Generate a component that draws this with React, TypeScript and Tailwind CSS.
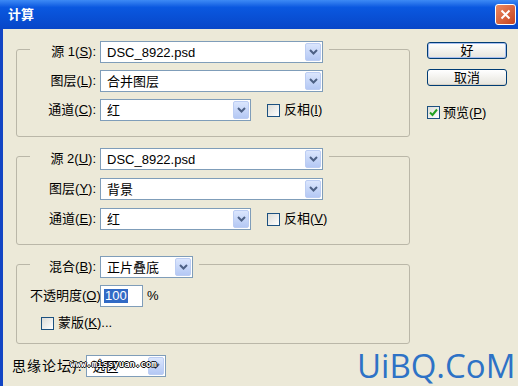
import React from "react";

const Chevron = () => (
    <svg width="9" height="6" viewBox="0 0 9 6">
        <path d="M1 1l3.5 3.5L8 1" fill="none" stroke="#4d6185" strokeWidth="2" />
    </svg>
);

const Select = ({ value, width }: { value: string; width: string }) => (
    <div className={`${width} h-[22px] flex items-center justify-between border border-[#7f9db9] bg-white`}>
        <span className="pl-[6px] text-[13px] text-black leading-none">{value}</span>
        <div className="w-[16px] h-[18px] mr-[1px] flex items-center justify-center rounded-[2px] border border-[#bccdf3] bg-linear-to-b from-[#dbe6fd] to-[#b4c8f4]">
            <Chevron />
        </div>
    </div>
);

const Check = ({ checked = false }: { checked?: boolean }) => (
    <div className="w-[13px] h-[13px] flex items-center justify-center border border-[#1c5180] bg-linear-to-br from-[#dcdcd7] to-white">
        {checked && (
            <svg width="9" height="9" viewBox="0 0 9 9">
                <path d="M1 4.5l2.5 2.5L8 1.5" fill="none" stroke="#21a121" strokeWidth="2" />
            </svg>
        )}
    </div>
);

const Row = ({ label, children }: { label: React.ReactNode; children: React.ReactNode }) => (
    <div className="flex items-center h-[22px]">
        <div className="w-[70px] pr-[4px] text-right text-[13px] whitespace-nowrap">{label}</div>
        {children}
    </div>
);

const Group = ({ legend, children, className = "" }: { legend: React.ReactNode; children: React.ReactNode; className?: string }) => (
    <div className={`border border-[#bab7a8] rounded-[3px] ${className}`}>
        <div className="-mt-[9px] ml-[13px] w-fit pr-[6px] bg-[#ece9d8]">{legend}</div>
        {children}
    </div>
);

const Button = ({ children, primary = false }: { children: React.ReactNode; primary?: boolean }) => (
    <div
        className={`w-[80px] h-[17px] flex items-center justify-center rounded-[3px] border border-[#003c74] bg-linear-to-b from-white to-[#e6e4dc] text-[13px] leading-none ${
            primary ? "shadow-[inset_0_0_0_1px_#a8bff0]" : "shadow-[inset_0_-1px_0_#d8d2c6]"
        }`}
    >
        {children}
    </div>
);

const App = () => {
    return (
        <div className="relative w-[518px] h-[386px] overflow-hidden bg-[#ece9d8] text-black font-['Liberation_Sans','Noto_Sans_CJK_SC',sans-serif]">
            {/* title bar */}
            <div className="h-[29px] flex items-center justify-between pl-[8px] pr-[2px] bg-linear-to-b from-[#3d8af5] via-[#0a58e0] via-25% to-[#0846c8]">
                <span className="text-white font-bold text-[13px]">计算</span>
                <div className="w-[21px] h-[21px] flex items-center justify-center rounded-[3px] border border-white bg-linear-to-br from-[#ec8a62] to-[#c4401c]">
                    <svg width="11" height="11" viewBox="0 0 11 11">
                        <path d="M1.5 1.5l8 8M9.5 1.5l-8 8" stroke="white" strokeWidth="2" />
                    </svg>
                </div>
            </div>

            <div className="flex h-[357px] border-l-[3px] border-[#1245c4]">
                {/* left column */}
                <div className="w-[394px] ml-[13px] pt-[20px] flex flex-col">
                    <Group
                        legend={
                            <Row label={<>源 1(<u>S</u>):</>}>
                                <Select value="DSC_8922.psd" width="w-[223px]" />
                            </Row>
                        }
                    >
                        <div className="flex flex-col gap-[7px] pt-[7px] pb-[15px] pl-[13px]">
                            <Row label={<>图层(<u>L</u>):</>}>
                                <Select value="合并图层" width="w-[223px]" />
                            </Row>
                            <Row label={<>通道(<u>C</u>):</>}>
                                <Select value="红" width="w-[151px]" />
                                <div className="ml-[16px] flex items-center gap-[4px] text-[13px]">
                                    <Check />
                                    <span>反相(<u>I</u>)</span>
                                </div>
                            </Row>
                        </div>
                    </Group>

                    <Group
                        className="mt-[19px]"
                        legend={
                            <Row label={<>源 2(<u>U</u>):</>}>
                                <Select value="DSC_8922.psd" width="w-[223px]" />
                            </Row>
                        }
                    >
                        <div className="flex flex-col gap-[8px] pt-[8px] pb-[14px] pl-[13px]">
                            <Row label={<>图层(<u>Y</u>):</>}>
                                <Select value="背景" width="w-[223px]" />
                            </Row>
                            <Row label={<>通道(<u>E</u>):</>}>
                                <Select value="红" width="w-[151px]" />
                                <div className="ml-[16px] flex items-center gap-[4px] text-[13px]">
                                    <Check />
                                    <span>反相(<u>V</u>)</span>
                                </div>
                            </Row>
                        </div>
                    </Group>

                    <Group
                        className="mt-[19px]"
                        legend={
                            <Row label={<>混合(<u>B</u>):</>}>
                                <Select value="正片叠底" width="w-[93px]" />
                            </Row>
                        }
                    >
                        <div className="flex flex-col pt-[7px] pb-[13px] pl-[13px]">
                            <Row label={<>不透明度(<u>O</u>):</>}>
                                <div className="w-[43px] h-[22px] flex items-center pl-[3px] border border-[#7f9db9] bg-white">
                                    <span className="bg-[#316ac5] text-white text-[13px] leading-[14px] px-[1px]">100</span>
                                </div>
                                <span className="ml-[4px] text-[13px]">%</span>
                            </Row>
                            <div className="mt-[9px] ml-[11px] h-[14px] flex items-center gap-[4px] text-[13px]">
                                <Check />
                                <span>蒙版(<u>K</u>)...</span>
                            </div>
                        </div>
                    </Group>

                    <div className="mt-[11px] -ml-[4px] flex items-center gap-[3px]">
                        <span className="text-[14px] tracking-[1px]">思缘论坛):</span>
                        <Select value="选区" width="w-[80px]" />
                    </div>
                </div>

                {/* right column */}
                <div className="ml-[17px] pt-[13px] flex flex-col">
                    <Button primary>好</Button>
                    <div className="mt-[10px]">
                        <Button>取消</Button>
                    </div>
                    <div className="mt-[17px] flex items-center gap-[3px] text-[13px]">
                        <Check checked />
                        <span>预览(<u>P</u>)</span>
                    </div>
                </div>
            </div>

            {/* watermarks */}
            <span className="absolute left-[70px] top-[360px] text-[9px] leading-none font-bold font-['DejaVu_Sans_Mono',monospace] text-white [text-shadow:1px_0_0_#000,-1px_0_0_#000,0_1px_0_#000,0_-1px_0_#000]">
                www.missyuan.com
            </span>
            <span className="absolute left-[357px] top-[349px] text-[33px] leading-[33px] text-[#2d72c6] font-['Open_Sans',sans-serif]">
                UiBQ.CoM
            </span>
        </div>
    );
};

export default App;
